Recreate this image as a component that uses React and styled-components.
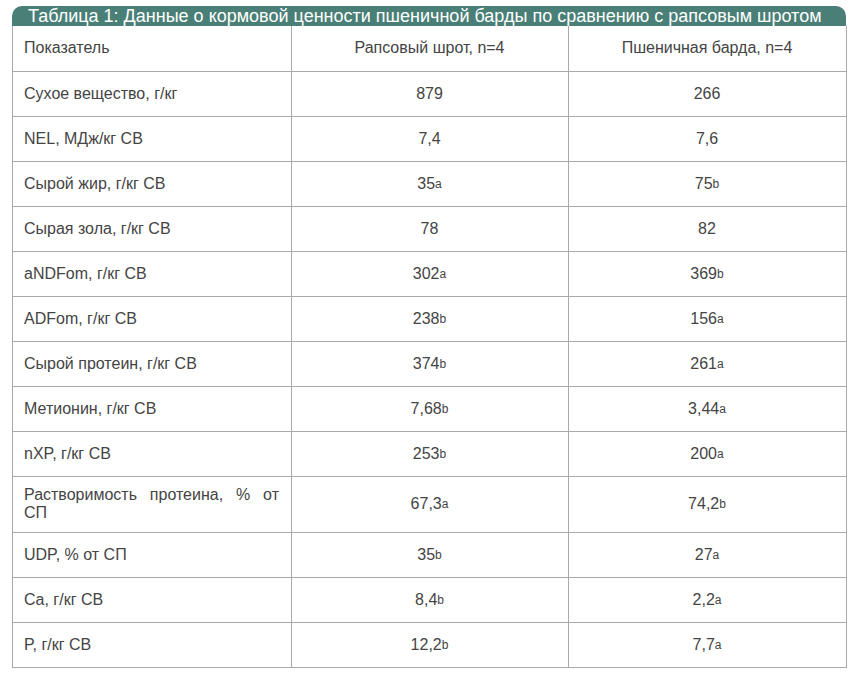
import React from "react";
import styled, { createGlobalStyle } from "styled-components";

const Global = createGlobalStyle`
  html, body { margin: 0; padding: 0; background: #fff; }
  body { font-family: "Liberation Sans", Arial, sans-serif; }
`;

const Page = styled.div`
  padding: 6px 11px 0 12px;
  width: 834px;
`;

const Caption = styled.div`
  background: #4a7f77;
  color: #fff;
  font-size: 18px;
  line-height: 20px;
  height: 20px;
  padding-left: 16px;
  border-radius: 10px 10px 0 0;
  white-space: nowrap;
`;

const Table = styled.table`
  width: 834px;
  border-collapse: collapse;
  table-layout: fixed;
  color: #444;
  font-size: 16px;
  border: 1px solid #a9a9a9;
  border-top: none;
`;

const Row = styled.tr`
  height: ${(p) => (p.$tall ? 56 : 45)}px;
`;

const Cell = styled.td`
  border: 1px solid #a9a9a9;
  border-top: ${(p) => (p.$first ? "none" : "1px solid #a9a9a9")};
  padding: 0 12px 0 11px;
  vertical-align: middle;
  line-height: 18px;
  text-align: ${(p) => (p.$label ? "justify" : "center")};
`;

const Sup = styled.span`
  font-size: 12px;
  vertical-align: 1px;
`;

const rows = [
  ["Сухое вещество, г/кг", ["879"], ["266"]],
  ["NEL, МДж/кг СВ", ["7,4"], ["7,6"]],
  ["Сырой жир, г/кг СВ", ["35", "a"], ["75", "b"]],
  ["Сырая зола, г/кг СВ", ["78"], ["82"]],
  ["aNDFom, г/кг СВ", ["302", "a"], ["369", "b"]],
  ["ADFom, г/кг СВ", ["238", "b"], ["156", "a"]],
  ["Сырой протеин, г/кг СВ", ["374", "b"], ["261", "a"]],
  ["Метионин, г/кг СВ", ["7,68", "b"], ["3,44", "a"]],
  ["nXP, г/кг СВ", ["253", "b"], ["200", "a"]],
  ["Растворимость протеина, % от СП", ["67,3", "a"], ["74,2", "b"], true],
  ["UDP, % от СП", ["35", "b"], ["27", "a"]],
  ["Ca, г/кг СВ", ["8,4", "b"], ["2,2", "a"]],
  ["P, г/кг СВ", ["12,2", "b"], ["7,7", "a"]],
];

const Val = ({ v }) => (
  <>
    {v[0]}
    {v[1] && <Sup>{v[1]}</Sup>}
  </>
);

export default function App() {
  return (
    <>
      <Global />
      <Page>
        <Caption>
          Таблица 1: Данные о кормовой ценности пшеничной барды по сравнению с рапсовым шротом
        </Caption>
        <Table>
          <colgroup>
            <col style={{ width: 279 }} />
            <col style={{ width: 277 }} />
            <col style={{ width: 278 }} />
          </colgroup>
          <tbody>
            <Row>
              <Cell $first $label>Показатель</Cell>
              <Cell $first>Рапсовый шрот, n=4</Cell>
              <Cell $first>Пшеничная барда, n=4</Cell>
            </Row>
            {rows.map(([label, a, b, tall]) => (
              <Row key={label} $tall={tall}>
                <Cell $label>{label}</Cell>
                <Cell><Val v={a} /></Cell>
                <Cell><Val v={b} /></Cell>
              </Row>
            ))}
          </tbody>
        </Table>
      </Page>
    </>
  );
}
